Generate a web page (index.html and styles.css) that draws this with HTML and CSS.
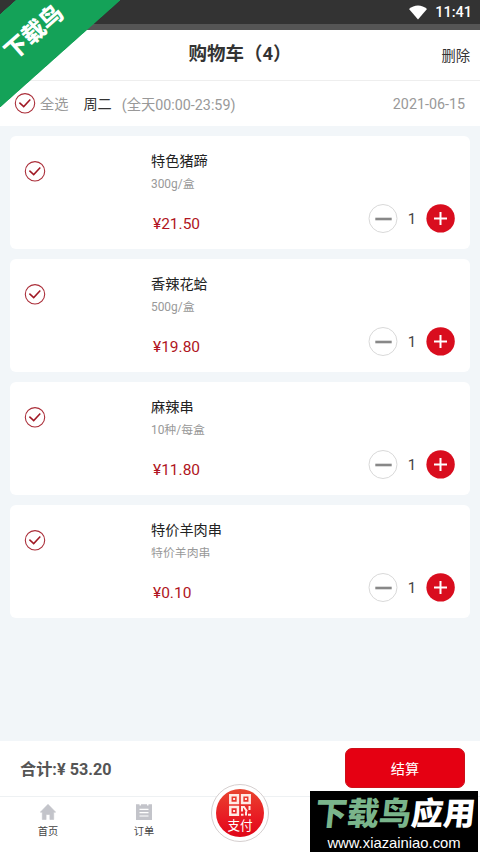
FILE: index.html
```
<!DOCTYPE html>
<html lang="zh-CN">
<head>
<meta charset="utf-8">
<title>购物车</title>
<link rel="stylesheet" href="styles.css">
</head>
<body>
<svg class="defs" width="0" height="0">
  <symbol id="check" viewBox="0 0 22 22"><circle cx="11" cy="11.300" r="9.7" fill="none" stroke="#aa2d38" stroke-width="1.1"/><path d="M5.400 10.6 9.700 14.600 16.300 7.600" fill="none" stroke="#a01824" stroke-width="1.5"/></symbol>
  <symbol id="minus" viewBox="0 0 30 30"><circle cx="15" cy="15.500" r="14" fill="#fff" stroke="#d9d9d9"/><path d="M7.3 16H23.7" stroke="#888" stroke-width="2.6"/></symbol>
  <symbol id="plus" viewBox="0 0 30 30"><circle cx="14.600" cy="15.400" r="14.2" fill="#d90d1e"/><path d="M8 15.500H21M14.500 9V22" stroke="#fff" stroke-width="2"/></symbol>
</svg>
<div class="app">
  <div class="status">
    <svg width="18" height="15" viewBox="0 0 18 15"><path d="M0 4C5-.8 13-.8 18 4L9 14.500Z" fill="#fff"/></svg>
    <span>11:41</span>
  </div>
  <header class="header"><span></span><h1>购物车（4）</h1><span class="delete">删除</span></header>
  <div class="filter">
    <svg class="check"><use href="#check"/></svg>
    <span class="all">全选</span><span class="day">周二</span><span class="time">(全天00:00-23:59)</span><span class="date">2021-06-15</span>
  </div>
  <main class="list">
    <article class="card">
      <svg class="check"><use href="#check"/></svg>
      <div class="info"><h2>特色猪蹄</h2><p class="spec">300g/盒</p><p class="price">¥21.50</p></div>
      <div class="stepper"><svg><use href="#minus"/></svg><span>1</span><svg><use href="#plus"/></svg></div>
    </article>
    <article class="card">
      <svg class="check"><use href="#check"/></svg>
      <div class="info"><h2>香辣花蛤</h2><p class="spec">500g/盒</p><p class="price">¥19.80</p></div>
      <div class="stepper"><svg><use href="#minus"/></svg><span>1</span><svg><use href="#plus"/></svg></div>
    </article>
    <article class="card">
      <svg class="check"><use href="#check"/></svg>
      <div class="info"><h2>麻辣串</h2><p class="spec">10种/每盒</p><p class="price">¥11.80</p></div>
      <div class="stepper"><svg><use href="#minus"/></svg><span>1</span><svg><use href="#plus"/></svg></div>
    </article>
    <article class="card">
      <svg class="check"><use href="#check"/></svg>
      <div class="info"><h2>特价羊肉串</h2><p class="spec">特价羊肉串</p><p class="price">¥0.10</p></div>
      <div class="stepper"><svg><use href="#minus"/></svg><span>1</span><svg><use href="#plus"/></svg></div>
    </article>
  </main>
  <div class="total"><strong>合计:¥ 53.20</strong><button>结算</button></div>
  <nav class="tabs">
    <div class="tab"><svg width="16" height="16" viewBox="0 0 16 16"><path d="M8 .3 15.700 8.200H13.700V15.500H9.900V10.500H6.100V15.500H2.300V8.200H.3Z" fill="#c3c4ca" stroke="#c3c4ca" stroke-width=".6" stroke-linejoin="round"/></svg><span>首页</span></div>
    <div class="tab"><svg width="16" height="16" viewBox="0 0 16 16"><path d="M0 .3H3.500V1.500H5V.3H11V1.500H12.500V.3H16V16H0Z" fill="#c3c4ca"/><path d="M3.500 5.300H12.500M3.500 8.700H12.500M3.500 12H12.500" stroke="#fff" stroke-width="1.200"/></svg><span>订单</span></div>
    <div class="pay"><div class="disc">
      <svg width="22" height="22" viewBox="0 0 22 22" fill="none" stroke="#ffe9e4" stroke-width="2.5"><path d="M1.300 1.300H8.900V8.900H1.300ZM13.100 1.300H20.700V8.900H13.100ZM1.300 13.100H8.900V20.700H1.300Z"/><path d="M4.100 5.100H6.100M15.900 5.100H17.900M4.100 16.900H6.100" stroke-width="2"/><path d="M13 12V17.500M13 13H15L18 17.500M20.500 12V16M12 20.700H14.500M17 17.500V21.500M19 20.700H22" stroke-width="2"/></svg>
      <span>支付</span></div></div>
  </nav>
  <div class="ribbon"><span>下载鸟</span></div>
  <div class="watermark"><div class="brand"><span>下载鸟</span>应用</div><div class="url">www.xiazainiao.com</div></div>
</div>
</body>
</html>
```

FILE: styles.css
```
* { box-sizing: border-box; }
body { margin: 0; font-family: Roboto, "Noto Sans CJK SC", sans-serif; color: #333; background: #fff; }
h1, h2, p { margin: 0; font-weight: 400; }
svg { display: block; flex: none; }
.defs { position: absolute; }
.app { position: relative; width: 480px; height: 853px; overflow: hidden; display: flex; flex-direction: column; }
.status { height: 30px; flex: none; display: flex; justify-content: flex-end; gap: 8px; padding: 5px 8px 0 0; background: #333; border-bottom: 6px solid #555; color: #fff; font-size: 14.500px; font-weight: 500; line-height: 16px; }
.header { height: 51px; flex: none; display: grid; grid-template-columns: 1fr auto 1fr; padding: 0 10px; border-bottom: 1px solid #eee; }
.header h1 { font-size: 18.500px; font-weight: 700; line-height: 48px; white-space: nowrap; }
.delete { font-size: 14.300px; line-height: 52px; text-align: right; }
.filter { height: 45px; flex: none; display: flex; align-items: center; padding: 0 15px 0 14px; font-size: 14.200px; color: #999; }
.check { width: 22px; height: 22px; }
.filter .check { margin-top: -1px; }
.all { margin-left: 4px; }
.filter .all, .filter .day, .filter .time { margin-top: -1px; }
.day { margin-left: 15px; color: #333; }
.time { margin-left: 10px; font-size: 14.300px; }
.date { margin: 1px 0 0 auto; font-size: 14.300px; }
.list { flex: 1; display: flex; flex-direction: column; gap: 10px; padding: 10px; background: #f2f6f9; }
.card { height: 113px; display: flex; padding: 0 14px; background: #fff; border-radius: 6px; }
.card .check { margin-top: 24px; }
.info { flex: 1; padding: 15px 0 0 105px; }
.info h2 { font-size: 14.200px; line-height: 21px; color: #222; }
.spec { margin-top: 4px; font-size: 11.900px; line-height: 16px; color: #999; }
.price { margin: 22px 0 0 2px; font-size: 15.500px; line-height: 20px; color: #b01522; }
.stepper { display: flex; align-items: center; height: 30px; margin-top: 67px; font-size: 15px; color: #444; }
.stepper svg { width: 30px; height: 30px; }
.stepper span { width: 28px; text-align: center; padding-top: 1px; }
.total { height: 55px; flex: none; display: flex; justify-content: space-between; padding: 7px 15px 0 20px; }
.total strong { font-size: 16.200px; line-height: 43px; color: #555; }
.total button { width: 120px; height: 40px; padding: 0; border: 1px solid #cd1019; border-radius: 7px; background: #e50012; color: #fff; font: inherit; font-size: 14.200px; }
.tabs { height: 57px; flex: none; display: grid; grid-template-columns: repeat(5, 96px); border-top: 1px solid #eef1f3; }
.tab { display: flex; flex-direction: column; align-items: center; padding-top: 7px; font-size: 10.200px; line-height: 14px; color: #444; }
.tab span { margin-top: 5px; }
.pay { width: 58px; height: 58px; margin: -13px 0 0 19px; padding: 4px; border: 1px solid #d5cfcf; border-radius: 50%; background: #fff; }
.disc { height: 48px; display: flex; flex-direction: column; align-items: center; padding-top: 5px; border-radius: 50%; background: linear-gradient(#e9442f, #e81722 65%, #df0617); color: #fff; font-size: 12.600px; line-height: 20px; }
.ribbon { position: absolute; left: 0; top: 0; width: 120px; height: 107px; background: linear-gradient(to bottom right, #333 6.500%, #14a258 6.800%, #14a258 50%, transparent 50.5%); }
.ribbon span { position: absolute; left: 0; top: 22px; width: 69px; text-align: center; color: #fff; font-size: 23px; font-weight: 900; line-height: 22px; transform: rotate(-41deg); }
.watermark { position: absolute; left: 310px; top: 791px; width: 168px; height: 61px; background: #000; color: #fff; text-align: center; white-space: nowrap; }
.brand { padding: 4px 0 0 3px; font-size: 32px; line-height: 38px; font-weight: 900; transform: skewX(-6deg); }
.brand span { color: #7ab58b; }
.url { font: 14.800px/20px "Liberation Sans", sans-serif; }
```
